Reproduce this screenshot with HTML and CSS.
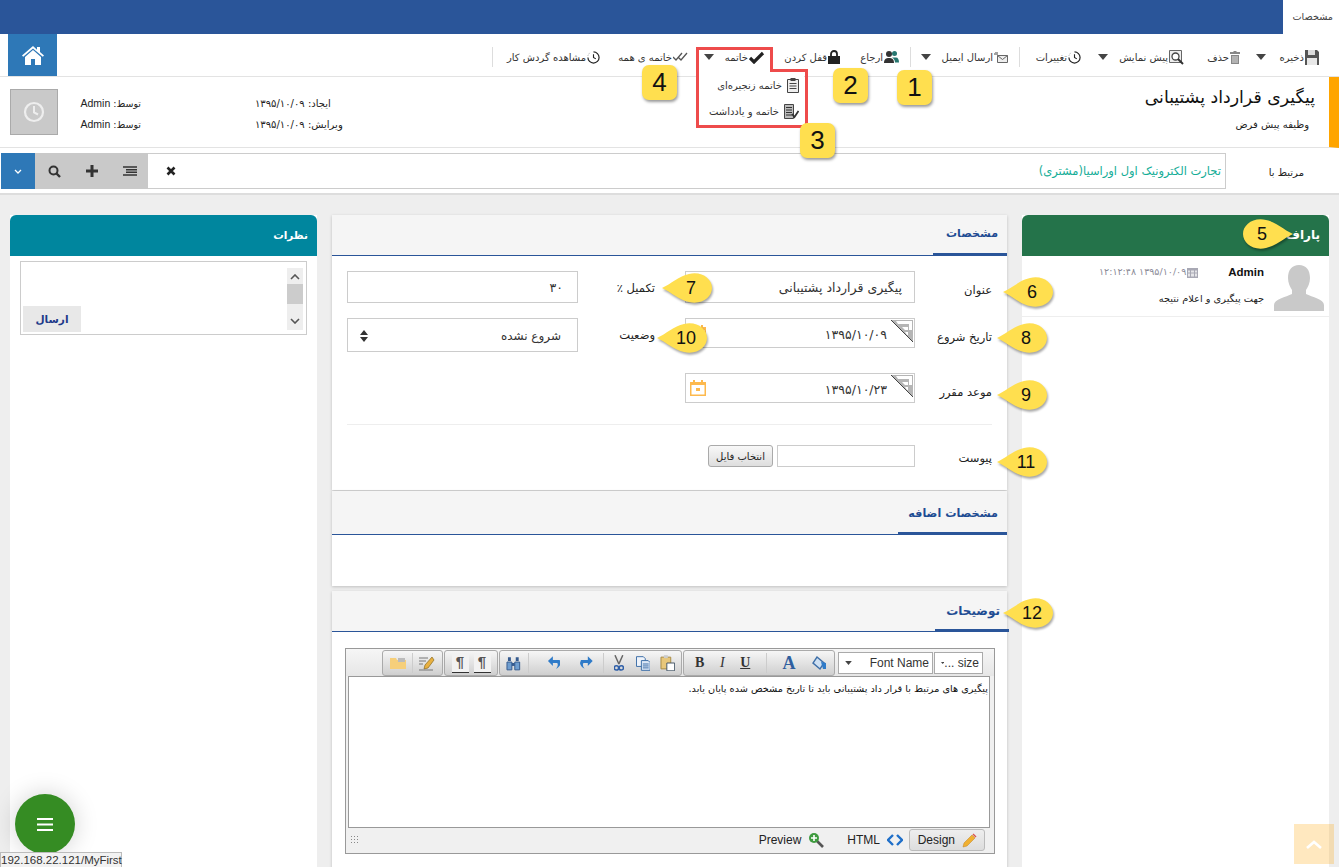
FILE: index.html
```html
<!DOCTYPE html>
<html lang="fa" dir="rtl">
  <head>
    <meta charset="UTF-8" />
    <title>پیگیری قرارداد پشتیبانی</title>
    <link rel="stylesheet" href="styles.css">
  </head>
  <body>
    <svg class="defs" width="0" height="0">
      <symbol id="pin-left" viewBox="0 0 50 30"><path d="M0 15C9 11 17 3 27 1c13-3 23 5 23 14s-10 17-23 14C17 27 9 19 0 15z"/></symbol>
      <symbol id="pin-right" viewBox="0 0 50 30"><path d="M50 15C41 11 33 3 23 1 10-2 0 6 0 15s10 17 23 14c10-2 18-10 27-14z"/></symbol>
      <symbol id="corner" viewBox="0 0 24 24">
        <path d="M1 1h22v22z" fill="#b5b5b5"/>
        <path d="M6 2h16v9h-3V5H8zM12 8h6v3h-3zM15 13h3v3h-1z" fill="#fff"/>
        <path d="M1 1l22 22" stroke="#444" stroke-width="1"/>
      </symbol>
      <symbol id="cal" viewBox="0 0 16 16"><path d="M3 0h2v2h6V0h2v2h3v14H0V2h3zM1.500 5v9.500h13V5z M6 8h4v3H6z" fill="#fdb94d" fill-rule="evenodd"/></symbol>
      <symbol id="caret" viewBox="0 0 10 6"><path d="M0 0h10L5 6z" fill="#444"/></symbol>
      <symbol id="clock" viewBox="0 0 14 14"><path d="M7 1a6 6 0 1 1-6 6" fill="none" stroke="#222" stroke-width="1.300"/><path d="M7 3.500V7l2.500 1.500" fill="none" stroke="#222" stroke-width="1.200"/><path d="M1 5l1-2 1.500-1" fill="none" stroke="#999" stroke-dasharray="1 1"/></symbol>
    </svg>

    <header class="topbar">
      <div class="topbar-tab">مشخصات</div>
    </header>

    <nav class="toolbar">
      <div class="tools">
        <a class="tool"><svg width="14" height="15" viewBox="0 0 14 15"><path d="M0 0h12l2 2v13H0z" fill="#555"/><path d="M3 0h7v5H3z" fill="#ddd"/><path d="M2 8h10v7H2z" fill="#e8e8e8"/></svg>ذخیره</a>
        <a class="tool"><svg class="caret" width="10" height="6"><use href="#caret"/></svg></a>
        <a class="tool"><svg width="10" height="13" viewBox="0 0 10 13"><path d="M3.500 0h3v1H10v2H0V1h3.500zM1 4h8v9H1z" fill="#888"/><path d="M3 5v7M5 5v7M7 5v7" stroke="#ddd"/></svg>حذف</a>
        <a class="tool"><svg width="15" height="15" viewBox="0 0 15 15"><path d="M.5.500h12v12H.5z" fill="#eee" stroke="#666"/><circle cx="6.500" cy="6.500" r="3.500" fill="#fff" stroke="#444" stroke-width="1.300"/><path d="M9 9l5 5" stroke="#333" stroke-width="2"/></svg>پیش نمایش</a>
        <a class="tool"><svg class="caret" width="10" height="6"><use href="#caret"/></svg></a>
        <a class="tool"><svg width="13" height="13"><use href="#clock"/></svg>تغییرات</a>
        <span class="tool-sep"></span>
        <a class="tool"><svg width="14" height="11" viewBox="0 0 14 11"><path d="M3.500 3.500h10v7h-10z" fill="#eee" stroke="#666"/><path d="M3.500 3.500l5 4 5-4" fill="none" stroke="#666"/><path d="M0 2h4M1 0h3" stroke="#444"/></svg>ارسال ایمیل</a>
        <a class="tool"><svg class="caret" width="10" height="6"><use href="#caret"/></svg></a>
        <span class="tool-sep"></span>
        <a class="tool"><svg width="15" height="14" viewBox="0 0 15 14"><circle cx="5" cy="4" r="3" fill="#333"/><path d="M0 13c0-4 2-5 5-5s5 1 5 5z" fill="#333"/><circle cx="10.500" cy="3.500" r="2.500" fill="#26766f"/><path d="M8 7.500h4c2 0 3 2 3 5h-4c0-2-1-4-3-5z" fill="#26766f"/></svg>ارجاع</a>
        <a class="tool"><svg width="12" height="14" viewBox="0 0 12 14"><path d="M3 6V4a3 3 0 0 1 6 0v2" fill="none" stroke="#222" stroke-width="1.800"/><path d="M0 6h12v8H0z" fill="#222"/></svg>قفل کردن</a>
        <a class="tool"><svg width="16" height="13" viewBox="0 0 16 13"><path d="M1 7l4 4 9-9" fill="none" stroke="#222" stroke-width="3.200"/></svg>خاتمه</a>
        <a class="tool"><svg class="caret" width="10" height="6"><use href="#caret"/></svg></a>
        <a class="tool"><svg width="15" height="10" viewBox="0 0 15 10"><path d="M0 5l3 3 6-7M5 5l3 3 6-7" fill="none" stroke="#555" stroke-width="1.300"/></svg>خاتمه ی همه</a>
        <a class="tool"><svg width="13" height="13"><use href="#clock"/></svg>مشاهده گردش کار</a>
        <span class="tool-sep"></span>
      </div>
      <a class="home-btn">
        <svg width="24" height="20" viewBox="0 0 24 20"><path d="M12 1L1 10.500l1.200 1.300L12 3.400l9.800 8.400 1.200-1.300-4-3.400V2h-3v2.800z" fill="#fff"/><path d="M12 5l-8 7v8h6v-6h4v6h6v-8z" fill="#fff"/></svg>
      </a>
    </nav>

    <section class="task-head">
      <div class="task-title">
        <h1>پیگیری قرارداد پشتیبانی</h1>
        <p>وظیفه پیش فرض</p>
      </div>
      <div class="task-meta">
        <div class="meta-dates">
          <span>ایجاد: <span class="meta-num">۱۳۹۵/۱۰/۰۹</span></span>
          <span>ویرایش: <span class="meta-num">۱۳۹۵/۱۰/۰۹</span></span>
        </div>
        <div class="meta-users">
          <span>توسط: <bdi>Admin</bdi></span>
          <span>توسط: <bdi>Admin</bdi></span>
        </div>
        <div class="clock-box">
          <svg width="22" height="22" viewBox="0 0 22 22"><circle cx="11" cy="11" r="9" fill="none" stroke="#eee" stroke-width="2.200"/><path d="M11 5v6.500l4 2" fill="none" stroke="#eee" stroke-width="2"/></svg>
        </div>
      </div>
    </section>

    <section class="related">
      <label class="related-label">مرتبط با</label>
      <div class="related-input">
        <span class="related-value">تجارت الکترونیک اول اوراسیا(مشتری)</span>
        <svg class="related-x" width="10" height="10" viewBox="0 0 10 10"><path d="M1.500 1.500l7 7M8.500 1.500l-7 7" stroke="#222" stroke-width="2.600"/></svg>
      </div>
      <div class="related-btns">
        <a><svg width="14" height="10" viewBox="0 0 14 10"><path d="M0 1h14M3 3.700h11M3 6.300h11M0 9h14" stroke="#333" stroke-width="1.500"/></svg></a>
        <a><svg width="12" height="12" viewBox="0 0 12 12"><path d="M6 0v12M0 6h12" stroke="#333" stroke-width="3"/></svg></a>
        <a><svg width="13" height="13" viewBox="0 0 13 13"><circle cx="5.500" cy="5.500" r="4" fill="none" stroke="#333" stroke-width="2"/><path d="M8.500 8.500l3.500 3.500" stroke="#333" stroke-width="2.400"/></svg></a>
      </div>
      <a class="related-more"><svg width="8" height="5" viewBox="0 0 8 5"><path d="M1 1l3 3 3-3" fill="none" stroke="#fff" stroke-width="1.300"/></svg></a>
    </section>

    <main class="content">
      <aside class="panel">
        <h2 class="panel-head panel-green">پاراف</h2>
        <div class="paraf-row">
          <svg class="avatar" width="50" height="46" viewBox="0 0 50 46"><path d="M25 0c7 0 11 5 11 13 0 5-2 9-4 12v4c6 3 18 5 18 11v6H0v-6c0-6 12-8 18-11v-4c-2-3-4-7-4-12C14 5 18 0 25 0z" fill="#c9c9c9"/></svg>
          <div class="paraf-body">
            <div class="paraf-top">
              <strong>Admin</strong>
              <span class="paraf-date">
                <svg width="11" height="11" viewBox="0 0 11 11"><path d="M0 1h11v10H0z" fill="#a8a8b4"/><path d="M1 3.500h2v2H1zM4 3.500h3v2H4zM8 3.500h2v2H8zM1 6.500h2v3H1zM4 6.500h3v3H4zM8 6.500h2v3H8z" fill="#e5e5e8"/></svg>
                ۱۳۹۵/۱۰/۰۹ ۱۲:۱۲:۴۸
              </span>
            </div>
            <p>جهت پیگیری و اعلام نتیجه</p>
          </div>
        </div>
      </aside>

      <div class="middle">
        <section class="card card-main">
          <div class="card-head"><span class="card-tab tab-main">مشخصات</span></div>
          <div class="form-grid">
            <label class="form-label">عنوان</label>
            <div class="field field-title">پیگیری قرارداد پشتیبانی</div>
            <label class="form-label form-label2">تکمیل ٪</label>
            <div class="field field-title field-pct">۳۰</div>

            <label class="form-label">تاریخ شروع</label>
            <div class="field field-date">۱۳۹۵/۱۰/۰۹
              <svg class="corner" width="24" height="24"><use href="#corner"/></svg>
              <svg class="cal" width="16" height="16"><use href="#cal"/></svg>
            </div>
            <label class="form-label form-label2">وضعیت</label>
            <div class="field field-select">شروع نشده
              <svg class="updown" width="8" height="12" viewBox="0 0 8 12"><path d="M4 0l4 5H0zM4 12l4-5H0z" fill="#333"/></svg>
            </div>

            <label class="form-label">موعد مقرر</label>
            <div class="field field-date">۱۳۹۵/۱۰/۲۳
              <svg class="corner" width="24" height="24"><use href="#corner"/></svg>
              <svg class="cal" width="16" height="16"><use href="#cal"/></svg>
            </div>
          </div>
          <hr class="form-line">
          <div class="form-file">
            <label class="form-label">پیوست</label>
            <div class="file-box"></div>
            <button class="file-btn" type="button">انتخاب فایل</button>
          </div>
        </section>

        <section class="card card-extra">
          <div class="card-head card-head-sm"><span class="card-tab tab-extra">مشخصات اضافه</span></div>
        </section>

        <section class="card card-desc">
          <div class="card-head"><span class="card-tab tab-desc">توضیحات</span></div>
          <div class="editor">
            <div class="ed-toolbar">
              <div class="ed-select ed-size"><span>... size</span><svg width="7" height="4"><use href="#caret"/></svg></div>
              <div class="ed-select ed-font"><span>Font Name</span><svg width="7" height="4"><use href="#caret"/></svg></div>
              <div class="ed-group ed-group-format">
                <svg width="16" height="16" viewBox="0 0 16 16"><path d="M6 2l7 6-4 6-7-6z" fill="#cfe0f2" stroke="#3e6fa8" stroke-width="1.400"/><path d="M10 7l5 1v6h-3z" fill="#2f7bc9"/></svg>
                <b class="ed-a">A</b>
                <span class="ed-sep"></span>
                <span class="ed-u">U</span>
                <i class="ed-i">I</i>
                <b class="ed-b">B</b>
              </div>
              <div class="ed-group ed-group-edit">
                <svg width="15" height="16" viewBox="0 0 15 16"><path d="M1 2h10v12H1z" fill="#e8c77a" stroke="#a88b45"/><path d="M4 0h4v3H4z" fill="#ccc"/><path d="M7 8h8v8H7z" fill="#fff" stroke="#456"/></svg>
                <svg width="15" height="15" viewBox="0 0 15 15"><path d="M.5.500h7l2 2v8h-9z" fill="#eef3fa" stroke="#3e6fa8"/><path d="M5.500 4.500h7l2 2v8h-9z" fill="#dbe7f6" stroke="#3e6fa8"/><path d="M7 8h6M7 10h6M7 12h6" stroke="#3e6fa8"/></svg>
                <svg width="10" height="16" viewBox="0 0 10 16"><path d="M1 0l4 9M9 0L5 9" stroke="#666" stroke-width="1.500"/><circle cx="2.500" cy="13" r="2.200" fill="none" stroke="#2f5fa8" stroke-width="1.600"/><circle cx="7.500" cy="13" r="2.200" fill="none" stroke="#2f5fa8" stroke-width="1.600"/></svg>
                <span class="ed-sep"></span>
                <svg width="14" height="14" viewBox="0 0 14 14"><path d="M13 4H6V0L1 5l5 5V7h4c1 0 1 1 1 2 0 2-2 4-2 4 3-1 5-4 5-6z" transform="matrix(-1 0 0 1 14 0)" fill="#2f7bc9"/></svg>
                <svg width="14" height="14" viewBox="0 0 14 14"><path d="M13 4H6V0L1 5l5 5V7h4c1 0 1 1 1 2 0 2-2 4-2 4 3-1 5-4 5-6z" fill="#2f7bc9"/></svg>
                <span class="ed-sep"></span>
                <svg width="15" height="15" viewBox="0 0 15 15"><path d="M2 1h3v4H2zM10 1h3v4h-3z" fill="#345a8f"/><path d="M1 6h5v8H1zM9 6h5v8H9z" fill="#6f9ed0" stroke="#345a8f"/><path d="M6 7h3v3H6z" fill="#345a8f"/></svg>
              </div>
              <div class="ed-group ed-group-dir">
                <span class="ed-para">¶</span>
                <span class="ed-para">¶</span>
              </div>
              <div class="ed-group ed-group-file">
                <svg width="16" height="15" viewBox="0 0 16 15"><path d="M13 1L6 9l-1 4 4-1 6-8z" fill="#e8b040" stroke="#8a6a20" stroke-width=".7"/><path d="M0 2h9M0 5h7M0 8h4M0 14h14" stroke="#777"/></svg>
                <span class="ed-sep"></span>
                <svg width="16" height="12" viewBox="0 0 16 12"><path d="M0 1h6l1 2h9v9H0z" fill="#f6cf7a"/><path d="M8 1h7v4H8z" fill="#bbb"/></svg>
              </div>
            </div>
            <div class="ed-area">پیگیری های مرتبط با قرار داد پشتیبانی باید تا تاریخ مشخص شده پایان یابد.</div>
            <div class="ed-foot">
              <a class="ed-mode ed-design">
                <svg width="15" height="15" viewBox="0 0 15 15"><path d="M1 14l1-4 8-8 3 3-8 8z" fill="#f0b030" stroke="#c08020" stroke-width=".5"/><path d="M10.500 1.500l1-1 3 3-1 1z" fill="#d9534f"/></svg>
                <bdi>Design</bdi>
              </a>
              <a class="ed-mode">
                <svg width="16" height="12" viewBox="0 0 16 12"><path d="M6 1L1 6l5 5M10 1l5 5-5 5" fill="none" stroke="#1f6fc9" stroke-width="2.400"/></svg>
                <bdi>HTML</bdi>
              </a>
              <a class="ed-mode">
                <svg width="16" height="16" viewBox="0 0 16 16"><path d="M9 9l6 6" stroke="#555" stroke-width="2.600"/><circle cx="6" cy="6" r="5" fill="#3f9b3f"/><path d="M6 3v6M3 6h6" stroke="#fff" stroke-width="1.600"/></svg>
                <bdi>Preview</bdi>
              </a>
              <span class="ed-grip"></span>
            </div>
          </div>
        </section>
      </div>

      <aside class="panel">
        <h2 class="panel-head panel-teal">نظرات</h2>
        <div class="comment-box">
          <div class="comment-scroll">
            <svg width="10" height="6" viewBox="0 0 10 6"><path d="M1 5l4-4 4 4" fill="none" stroke="#555" stroke-width="1.600"/></svg>
            <span class="comment-thumb"></span>
            <svg width="10" height="6" viewBox="0 0 10 6"><path d="M1 1l4 4 4-4" fill="none" stroke="#555" stroke-width="1.600"/></svg>
          </div>
          <button class="comment-send" type="button">ارسال</button>
        </div>
      </aside>
    </main>

    <!-- annotations drawn over the screenshot -->
    <svg class="red-box" width="112" height="81" viewBox="0 0 112 81"><path d="M1.500 1.500h74v22h35v56h-109z" fill="none" stroke="#ee4b4b" stroke-width="3"/></svg>
    <ul class="drop-menu">
      <li>
        <svg width="12" height="15" viewBox="0 0 12 15"><path d="M.5 1.500h11v13H.5z" fill="#eee" stroke="#444"/><path d="M3.500 0h5v3h-5z" fill="#444"/><path d="M2.500 5.500h7M2.500 8h7M2.500 10.500h7" stroke="#444"/></svg>
        خاتمه زنجیره‌ای
      </li>
      <li>
        <svg width="15" height="15" viewBox="0 0 15 15"><path d="M.5.500h9v14h-9z" fill="#bbb" stroke="#444"/><path d="M2 3.500h6M2 6h6M2 8.500h6M2 11h6" stroke="#333"/><path d="M8 10l2.500 3L14.500 7" fill="none" stroke="#333" stroke-width="1.800"/></svg>
        خاتمه و یادداشت
      </li>
    </ul>

    <span class="badge badge-1">1</span>
    <span class="badge badge-2">2</span>
    <span class="badge badge-3">3</span>
    <span class="badge badge-4">4</span>

    <span class="pin pin-5"><svg width="50" height="30"><use href="#pin-right"/></svg><b>5</b></span>
    <span class="pin pin-6"><svg width="50" height="30"><use href="#pin-left"/></svg><b>6</b></span>
    <span class="pin pin-7"><svg width="50" height="30"><use href="#pin-left"/></svg><b>7</b></span>
    <span class="pin pin-8"><svg width="50" height="30"><use href="#pin-left"/></svg><b>8</b></span>
    <span class="pin pin-9"><svg width="50" height="30"><use href="#pin-left"/></svg><b>9</b></span>
    <span class="pin pin-10"><svg width="50" height="30"><use href="#pin-left"/></svg><b>10</b></span>
    <span class="pin pin-11"><svg width="50" height="30"><use href="#pin-left"/></svg><b>11</b></span>
    <span class="pin pin-12"><svg width="50" height="30"><use href="#pin-left"/></svg><b>12</b></span>

    <a class="fab"><svg width="16" height="13" viewBox="0 0 16 13"><path d="M0 1h16M0 6.500h16M0 12h16" stroke="#fff" stroke-width="1.800"/></svg></a>
    <a class="to-top"><svg width="16" height="9" viewBox="0 0 16 9"><path d="M1 8l7-6 7 6" fill="none" stroke="#fff" stroke-width="2.600"/></svg></a>
    <div class="status-url">192.168.22.121/MyFirst</div>
  </body>
</html>
```

FILE: styles.css
```css
* {
  box-sizing: border-box;
}
html,
body {
  height: 867px;
}
body {
  margin: 0;
  overflow: hidden;
  position: relative;
  font-family: "DejaVu Sans", sans-serif;
  font-size: 10px;
  color: #222;
  background-color: #eee;
}
a {
  text-decoration: none;
  color: inherit;
}
.defs {
  position: absolute;
}

/* top bar */
.topbar {
  height: 34px;
  background-color: #2a5599;
  display: flex;
}
.topbar-tab {
  width: 56px;
  background-color: #fff;
  padding-right: 6px;
  line-height: 34px;
  font-size: 9.7px;
  color: #444;
}

/* toolbar */
.toolbar {
  height: 43px;
  background-color: #fff;
  border-bottom: 1px solid #e3e3e3;
  display: flex;
  justify-content: space-between;
  padding: 0 20px 0 282px;
}
.tools {
  display: grid;
  grid-template-columns: 53px 26px 56px 76px 27px 61px 12px 77px 20px 12px 59px 75px 51px 26px 88px 107px 1px;
  align-items: center;
  height: 42px;
  margin-top: 2px;
  width: 827px;
}
.tool {
  display: flex;
  align-items: center;
  gap: 1px;
  white-space: nowrap;
  font-size: 10px;
  color: #333;
  height: 20px;
}
.tool-sep {
  width: 1px;
  height: 20px;
  background-color: #ddd;
}
.home-btn {
  width: 49px;
  height: 42px;
  margin-left: -274px;
  background-color: #2e78b7;
  display: flex;
  align-items: center;
  justify-content: center;
}

/* task header */
.task-head {
  height: 71px;
  background-color: #fff;
  border-bottom: 1px solid #e3e3e3;
  border-right: 10px solid #ffa500;
  display: flex;
  justify-content: space-between;
  padding: 0 0 0 10px;
}
.task-title {
  padding: 7px 14px 0 0;
}
.task-title h1 {
  margin: 0;
  font-size: 17.300px;
  font-weight: normal;
  color: #111;
  line-height: 26px;
}
.task-title p {
  margin: 8px 6px 0 0;
  font-size: 10px;
  line-height: 14px;
}
.task-meta {
  display: flex;
  align-items: center;
}
.meta-dates,
.meta-users {
  display: flex;
  flex-direction: column;
  gap: 8px;
  padding-top: 3px;
  font-size: 10px;
  line-height: 13px;
  white-space: nowrap;
}
.meta-dates {
  align-items: flex-end;
  margin-left: 114px;
}
.meta-num {
  letter-spacing: 1.500px;
}
.meta-users {
  width: 58px;
  margin-left: 25px;
  font-size: 9.500px;
}
.meta-users bdi {
  font-family: "Liberation Sans", sans-serif;
  font-size: 10.500px;
}
.clock-box {
  width: 48px;
  height: 46px;
  background-color: #c9c9c9;
  border: 1px solid #aaa;
  display: flex;
  align-items: center;
  justify-content: center;
}

/* related row */
.related {
  height: 47px;
  background-color: #fff;
  border-bottom: 2px solid #ddd;
  display: flex;
  align-items: flex-start;
  padding: 5px 0 0 1px;
}
.related-label {
  width: 113px;
  padding: 13px 35px 0 0;
  font-size: 10px;
  line-height: 14px;
}
.related-input {
  width: 1078px;
  height: 36px;
  border: 1px solid #ccc;
  border-left: 0;
  display: flex;
  justify-content: space-between;
  align-items: center;
  padding: 0 4px 0 18px;
}
.related-value {
  font-size: 11.500px;
  color: #14ad97;
}
.related-btns {
  width: 113px;
  height: 36px;
  background-color: #c9c9c9;
  display: flex;
  direction: ltr;
  flex-direction: row-reverse;
  justify-content: flex-start;
}
.related-btns a {
  display: flex;
  align-items: center;
  justify-content: center;
  width: 37px;
}
.related-btns a:first-child {
  margin-left: 1px;
}
.related-more {
  width: 34px;
  height: 36px;
  background-color: #2e78b7;
  display: flex;
  align-items: center;
  justify-content: center;
}

/* three columns */
.content {
  display: flex;
  gap: 15px;
  padding: 20px 10px 0;
  height: 672px;
}
.panel {
  width: 307px;
  background-color: #fff;
  flex: none;
}
.panel-head {
  margin: 0;
  height: 41px;
  border-radius: 6px 6px 0 0;
  color: #fff;
  font-size: 11px;
  line-height: 40px;
  padding-right: 9px;
}
.panel-green {
  background-color: #24734a;
  font-size: 12px;
}
.panel-teal {
  background-color: #00869e;
  font-size: 10.500px;
}
.paraf-row {
  display: flex;
  gap: 10px;
  height: 61px;
  padding: 9px 5px 0 0;
  border-bottom: 1px solid #eee;
}
.avatar {
  flex: none;
}
.paraf-top {
  display: flex;
  justify-content: space-between;
  width: 165px;
  line-height: 14px;
}
.paraf-top strong {
  font-family: "Liberation Sans", sans-serif;
  font-size: 11.500px;
  color: #111;
}
.paraf-date {
  display: flex;
  align-items: center;
  gap: 1px;
  color: #8b8b98;
  font-size: 9.500px;
  letter-spacing: 1.500px;
  white-space: nowrap;
}
.paraf-body p {
  margin: 13px 0 0;
  font-size: 9.800px;
  line-height: 14px;
}

/* middle column */
.middle {
  flex: 1;
  min-width: 0;
}
.card {
  background-color: #fff;
  box-shadow: 0 1px 3px rgba(0, 0, 0, .2);
}
.card-main {
  height: 275px;
}
.card-extra {
  height: 95px;
  margin-top: 1px;
}
.card-desc {
  height: 280px;
  margin-top: 5px;
}
.card-head {
  height: 41px;
  background-color: #f5f5f5;
  border-bottom: 1px solid #2a5599;
}
.card-head-sm {
  height: 44px;
}
.card-tab {
  display: block;
  font-size: 11px;
  font-weight: bold;
  color: #1e4c93;
  border-bottom: 3px solid #2a5599;
  line-height: 14px;
}
.tab-main {
  width: 74px;
  padding: 12px 9px 0 0;
  height: 41px;
}
.tab-extra {
  width: 109px;
  padding: 16px 9px 0 0;
  height: 44px;
  font-size: 11.200px;
}
.tab-desc {
  width: 74px;
  padding: 13px 9px 0 0;
  margin-right: -2px;
  height: 41px;
  font-size: 12px;
}
.form-grid {
  display: grid;
  grid-template-columns: 92px 230px 107px 231px;
  grid-template-rows: 47px 55px 30px;
  align-items: start;
  padding-top: 15px;
}
.form-label {
  font-size: 11.500px;
  padding: 12px 15px 0 0;
  line-height: 14px;
  color: #222;
  white-space: nowrap;
}
.form-label2 {
  padding: 10px 30px 0 0;
}
.field {
  border: 1px solid #ccc;
  position: relative;
  font-size: 12.500px;
  line-height: 16px;
  color: #333;
}
.field-title {
  height: 32px;
  padding: 8px 12px 0 0;
}
.field-pct {
  padding-right: 14px;
}
.field-date {
  height: 30px;
  padding: 8px 27px 0 0;
  letter-spacing: 2.300px;
}
.field-select {
  height: 34px;
  padding: 9px 16px 0 0;
  font-size: 12px;
}
.corner {
  position: absolute;
  top: 0;
  right: 0;
}
.cal {
  position: absolute;
  top: 6px;
  left: 4px;
}
.updown {
  position: absolute;
  top: 11px;
  left: 12px;
}
.form-line {
  margin: 21px 15px 0;
  height: 1px;
  border: 0;
  background-color: #eee;
}
.form-file {
  display: flex;
  align-items: flex-start;
  margin-top: 20px;
}
.form-file .form-label {
  width: 92px;
  padding-top: 6px;
}
.file-box {
  width: 138px;
  height: 22px;
  border: 1px solid #ccc;
  margin-left: 4px;
}
.file-btn {
  width: 65px;
  height: 22px;
  padding: 0;
  font-family: inherit;
  font-size: 10px;
  color: #222;
  background: linear-gradient(#f8f8f8, #dedede);
  border: 1px solid #aaa;
  border-radius: 3px;
}

/* rich text editor */
.editor {
  width: 650px;
  height: 206px;
  margin: 16px 12px 0 0;
  border: 1px solid #999;
  background-color: #f0f0f0;
  direction: ltr;
}
.ed-toolbar {
  height: 27px;
  display: flex;
  flex-direction: row-reverse;
  align-items: flex-start;
  padding: 1px 11px 0 0;
  background: linear-gradient(#f6f6f6, #e6e6e6);
}
.ed-select {
  height: 22px;
  margin-top: 2px;
  background-color: #fff;
  border: 1px solid #aaa;
  display: flex;
  flex-direction: row-reverse;
  justify-content: space-between;
  align-items: center;
  padding: 0 3px 0 6px;
  font-family: "Liberation Sans", sans-serif;
  font-size: 12px;
  color: #333;
  white-space: nowrap;
}
.ed-size {
  width: 49px;
}
.ed-font {
  width: 95px;
  margin-right: 1px;
}
.ed-group {
  height: 26px;
  margin-right: 1px;
  border: 1px solid #aaa;
  border-radius: 3px;
  background: linear-gradient(#f6f6f6, #cfcfcf);
  display: flex;
  flex-direction: row-reverse;
  align-items: center;
}
.ed-group-format {
  width: 152px;
  margin-right: 3px;
  justify-content: space-between;
  padding: 0 7px 0 11px;
  font-family: "Liberation Serif", serif;
  font-size: 14px;
  color: #333;
}
.ed-a {
  font-size: 18px;
  color: #2f5f9f;
}
.ed-u {
  font-weight: bold;
  text-decoration: underline;
}
.ed-group-edit {
  width: 183px;
  padding: 0 6px;
}
.ed-group-edit > :nth-child(1) { margin-left: 10px; }
.ed-group-edit > :nth-child(2) { margin-left: 12px; }
.ed-group-edit > :nth-child(3) { margin-left: 10px; }
.ed-group-edit > :nth-child(4) { margin-left: 9px; }
.ed-group-edit > :nth-child(5) { margin-left: 20px; }
.ed-group-edit > :nth-child(6) { margin-left: 18px; }
.ed-group-edit > :nth-child(7) { margin-left: 7px; }
.ed-group-dir {
  width: 54px;
  justify-content: space-around;
  padding: 0 4px;
}
.ed-para {
  width: 17px;
  height: 20px;
  background-color: #f2f2f2;
  text-align: center;
  font-family: "Liberation Sans", sans-serif;
  font-size: 15px;
  font-weight: bold;
  color: #555;
  border-bottom: 1px solid #333;
  line-height: 18px;
}
.ed-group-file {
  width: 61px;
  justify-content: space-between;
  padding: 0 7px;
}
.ed-sep {
  width: 1px;
  height: 20px;
  background-color: #ccc;
}
.ed-area {
  height: 152px;
  margin: 0 4px 0 2px;
  border: 1px solid #999;
  background-color: #fff;
  direction: rtl;
  padding: 5px 1px;
  font-size: 9.700px;
  color: #111;
  line-height: 14px;
}
.ed-foot {
  height: 24px;
  display: flex;
  flex-direction: row-reverse;
  align-items: center;
  padding-right: 9px;
  font-family: "Liberation Sans", sans-serif;
  font-size: 12px;
  color: #222;
}
.ed-mode {
  display: flex;
  flex-direction: row-reverse;
  align-items: center;
  gap: 7px;
  margin-left: 23px;
}
.ed-design {
  width: 76px;
  height: 22px;
  padding: 0 7px;
  margin-left: 6px;
  background: linear-gradient(#eee, #ddd);
  border: 1px solid #bbb;
  border-radius: 3px;
}
.ed-grip {
  width: 10px;
  height: 10px;
  margin-right: auto;
  margin-left: 4px;
  background: radial-gradient(#888 40%, transparent 45%) 0 0 / 3px 3px;
}

/* comments */
.comment-box {
  height: 74px;
  margin: 5px 10px 0;
  border: 1px solid #ccc;
  position: relative;
  display: flex;
}
.comment-scroll {
  width: 16px;
  height: 62px;
  margin: 6px 3px 0 0;
  background-color: #eee;
  display: flex;
  flex-direction: column;
  align-items: center;
  padding: 6px 0;
}
.comment-thumb {
  width: 100%;
  height: 20px;
  margin: 4px 0 auto;
  background-color: #ccc;
}
.comment-send {
  position: absolute;
  left: 2px;
  bottom: 2px;
  width: 58px;
  height: 26px;
  padding: 0;
  border: 0;
  background-color: #e8e8e8;
  font-family: inherit;
  font-size: 10.500px;
  font-weight: bold;
  color: #1e3a8a;
}

/* annotations */
.red-box {
  position: absolute;
  top: 47px;
  left: 696px;
  z-index: 3;
}
.drop-menu {
  position: absolute;
  top: 72px;
  left: 699px;
  width: 105px;
  margin: 0;
  padding: 0;
  list-style: none;
  background-color: #fff;
  font-size: 10px;
  color: #333;
  z-index: 2;
}
.drop-menu li {
  display: flex;
  align-items: center;
  gap: 5px;
  height: 26px;
  padding-right: 5px;
  white-space: nowrap;
}
.badge {
  position: absolute;
  width: 35px;
  height: 35px;
  background-color: #ffdf4f;
  border-radius: 7px;
  box-shadow: 1px 2px 3px rgba(0, 0, 0, .4);
  font-family: "Liberation Sans", sans-serif;
  font-size: 26px;
  line-height: 35px;
  text-align: center;
  color: #111;
  z-index: 4;
}
.badge-1 { left: 897px; top: 70px; }
.badge-2 { left: 833px; top: 68px; }
.badge-3 { left: 800px; top: 123px; }
.badge-4 { left: 642px; top: 65px; }
.pin {
  position: absolute;
  width: 50px;
  height: 30px;
  z-index: 4;
}
.pin svg {
  display: block;
  fill: #ffdf4f;
  filter: drop-shadow(1px 2px 1px rgba(0, 0, 0, .35));
}
.pin b {
  position: absolute;
  top: 0;
  left: 14px;
  width: 30px;
  font-family: "Liberation Sans", sans-serif;
  font-size: 18px;
  font-weight: normal;
  line-height: 30px;
  text-align: center;
  color: #111;
  direction: ltr;
}
.pin-5 { left: 1243px; top: 219px; }
.pin-5 b { left: 4px; }
.pin-6 { left: 1003px; top: 277px; }
.pin-7 { left: 662px; top: 273px; }
.pin-8 { left: 997px; top: 323px; }
.pin-9 { left: 997px; top: 380px; }
.pin-10 { left: 657px; top: 323px; }
.pin-11 { left: 997px; top: 447px; }
.pin-12 { left: 1003px; top: 598px; }

/* floating bits */
.fab {
  position: absolute;
  left: 15px;
  top: 794px;
  width: 60px;
  height: 60px;
  border-radius: 50%;
  background-color: #358c23;
  box-shadow: 0 0 24px rgba(0, 0, 0, .18);
  display: flex;
  align-items: center;
  justify-content: center;
  z-index: 5;
}
.to-top {
  position: absolute;
  left: 1294px;
  top: 824px;
  width: 40px;
  height: 40px;
  background-color: rgba(255, 165, 0, .25);
  display: flex;
  align-items: center;
  justify-content: center;
  z-index: 5;
}
.status-url {
  position: absolute;
  left: 0;
  top: 852px;
  width: 122px;
  height: 15px;
  background-color: #f2f2f2;
  border: 1px solid #bbb;
  border-bottom: 0;
  font-family: "Liberation Sans", sans-serif;
  font-size: 11.500px;
  line-height: 14px;
  direction: ltr;
  white-space: nowrap;
  color: #333;
  z-index: 6;
}
```
